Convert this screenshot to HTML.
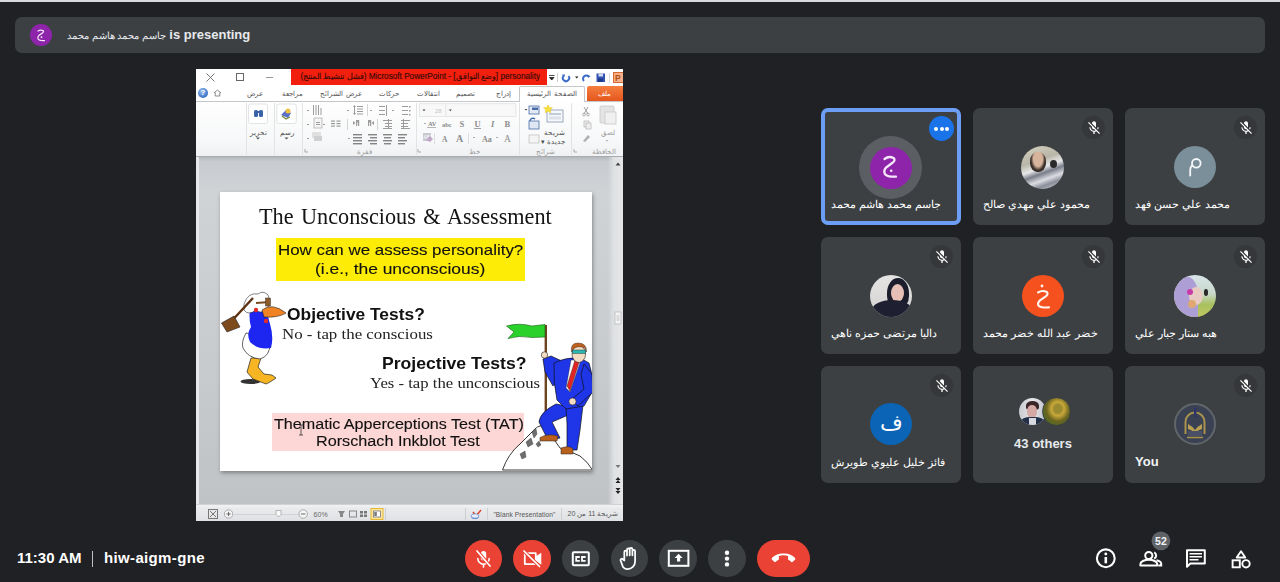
<!DOCTYPE html>
<html><head><meta charset="utf-8">
<style>
*{margin:0;padding:0;box-sizing:border-box}
html,body{width:1280px;height:582px;overflow:hidden;background:#202124;font-family:"Liberation Sans",sans-serif;position:relative}
.a{position:absolute}
svg{display:block}
.tile{position:absolute;width:140px;height:117px;background:#3c4043;border-radius:7px}
.ph{filter:blur(0.45px)}
.nm{position:absolute;left:10px;top:89px;color:#fff;font-size:11px;line-height:14px;white-space:nowrap}
.mute{position:absolute;left:109px;top:8px;width:23px;height:23px;border-radius:50%;background:#36373a}
.mute svg{position:absolute;left:3.5px;top:3.5px}
.avc{position:absolute;border-radius:50%;color:#fff;text-align:center;overflow:hidden}
.btn{position:absolute;top:539.5px;width:37.5px;height:37.5px;border-radius:50%;background:#3c4043}
.btn svg{position:absolute}
.red{background:#ea4335}
.ic{position:absolute;top:547px}
.c{position:absolute;transform:translateX(-50%)}
.st{line-height:20px;color:#111;white-space:nowrap;transform-origin:0 0}
.sep{top:34px;width:1px;height:52px;background:#e1e3e5}
</style></head>
<body>
<div class="a" style="left:0;top:0;width:1280px;height:2px;background:#d9dadc"></div>
<div class="a" style="left:15px;top:17px;width:1250px;height:36px;background:#3c4043;border-radius:7px"></div>
<div class="a" style="left:30px;top:24px;width:22px;height:22px;border-radius:50%;background:#8e24aa"></div>
<svg class="a" style="left:30px;top:24px" width="22" height="22" viewBox="0 0 22 22"><path d="M8 7 Q10.5 5.3 13 6.6 Q14.3 7.6 12.4 9 L9 11.4 Q7.3 13 8.1 15 Q9.3 17 14.5 16.6" fill="none" stroke="#f4e8f8" stroke-width="1.3" stroke-linecap="round" stroke-linejoin="round"/><circle cx="11.5" cy="13.2" r="0.9" fill="#f4e8f8"/></svg>
<div class="a" style="left:67px;top:27px;color:#e8eaed;font-size:12px;white-space:nowrap;line-height:16px"><span dir="rtl" style="font-size:9.6px">جاسم محمد هاشم محمد</span> <b style="font-size:13px">is presenting</b></div>

<!-- PowerPoint -->
<div class="a" id="ppt" style="left:196px;top:69px;width:427px;height:452px;background:#fff;overflow:hidden;font-family:'Liberation Sans',sans-serif">
  <!-- title bar -->
  <svg class="a" style="left:10px;top:4px" width="9" height="9" viewBox="0 0 9 9"><path d="M0.5 0.5L8.5 8.5M8.5 0.5L0.5 8.5" stroke="#6a6a6a" stroke-width="0.9"/></svg>
  <div class="a" style="left:40px;top:4px;width:8px;height:8px;border:1px solid #666;border-top-width:1.5px"></div>
  <div class="a" style="left:70px;top:8px;width:7px;height:1px;background:#999"></div>
  <div class="a" style="left:95px;top:0;width:256px;height:16px;background:#f11f0e"></div>
  <div class="a" style="left:96px;top:2px;width:248px;height:12px;font-size:8.2px;line-height:12px;color:#3b0b06;-webkit-text-stroke:0.15px #3b0b06;white-space:nowrap;text-align:right;overflow:hidden"><span style="display:inline-block;direction:ltr;unicode-bidi:isolate"><span style="unicode-bidi:isolate;direction:rtl">(فشل تنشيط المنتج)</span> Microsoft PowerPoint - <span style="unicode-bidi:isolate;direction:rtl">[وضع التوافق]</span> personality</span></div>
  <svg class="a" style="left:352px;top:3px" width="75" height="11" viewBox="0 0 75 11">
    <path d="M1 3.5h5.5M1.5 5.5h4.5l-2.25 2.5z" stroke="#222" fill="#222" stroke-width="0.8"/>
    <rect x="9" y="1" width="1" height="9" fill="#d0d0d0"/>
    <path d="M15.5 4a3.2 3.2 0 1 0 5 0" stroke="#3c6cc8" stroke-width="2" fill="none"/><path d="M14 2.5h3.2l-1.2 3z" fill="#3c6cc8"/>
    <path d="M27 4.5h3.5l-1.75 2z" fill="#222"/>
    <path d="M36 9a3.2 3.2 0 0 1 4.5-4.6" stroke="#3c6cc8" stroke-width="2" fill="none"/><path d="M39.5 2.5l3 1.8l-2.5 1.8z" fill="#3c6cc8"/>
    <rect x="48.5" y="1.5" width="8.5" height="8.5" fill="#3454b4"/><rect x="50.5" y="1.5" width="4.5" height="3" fill="#d4dcf0"/><rect x="50" y="6.5" width="5" height="3.5" fill="#1d3a8c"/>
    <rect x="61" y="1" width="1" height="9" fill="#ddd"/>
    <rect x="65.5" y="0.5" width="10" height="10" fill="#f5b08a" stroke="#d86a30" stroke-width="1"/><text x="67" y="9" font-size="8.5" font-weight="bold" fill="#b04e10" font-family="Liberation Sans">P</text>
  </svg>
  <!-- tab row -->
  <div class="a" style="left:0;top:32px;width:427px;height:1px;background:#c4c7ca"></div>
  <div class="a" style="left:2px;top:19px;width:10px;height:10px;border-radius:50%;background:radial-gradient(circle at 40% 35%,#9cc2f0,#3a72c8 70%);color:#fff;font-size:8px;line-height:10px;text-align:center;font-weight:bold">?</div>
  <svg class="a" style="left:17px;top:20px" width="9" height="8" viewBox="0 0 9 8"><path d="M1 4L4.5 1L8 4M2.2 3.5V7H6.8V3.5" stroke="#8a8a8a" fill="none" stroke-width="1"/></svg>
  <div class="a" style="left:323px;top:17px;width:66px;height:17px;background:#fff;border:1px solid #c4c7ca;border-bottom:none;border-radius:2px 2px 0 0"></div>
  <div class="a" style="left:391px;top:17px;width:37px;height:15px;background:linear-gradient(#f57f40,#e4561c);border-radius:2px 0 0 0"></div>
  <div class="a" style="left:0;top:18px;width:427px;height:14px;font-size:7.4px;line-height:14px;color:#505050;white-space:nowrap">
    <span class="c" style="left:59px" dir="rtl">عرض</span>
    <span class="c" style="left:96px" dir="rtl">مراجعة</span>
    <span class="c" style="left:145px" dir="rtl">عرض الشرائح</span>
    <span class="c" style="left:193px" dir="rtl">حركات</span>
    <span class="c" style="left:232px" dir="rtl">انتقالات</span>
    <span class="c" style="left:269px" dir="rtl">تصميم</span>
    <span class="c" style="left:307px" dir="rtl">إدراج</span>
    <span class="c" style="left:356px" dir="rtl">الصفحة الرئيسية</span>
    <span class="c" style="left:408px;color:#fff" dir="rtl">ملف</span>
  </div>
  <!-- ribbon -->
  <div class="a" style="left:0;top:33px;width:427px;height:54px;background:linear-gradient(#fefefe,#f7f8f9 70%,#f0f1f3)"></div>
  <div class="a" style="left:0;top:87px;width:427px;height:1px;background:#a8acb0"></div>
  <div class="a sep" style="left:50px"></div><div class="a sep" style="left:78px"></div><div class="a sep" style="left:106px"></div>
  <div class="a sep" style="left:220px"></div><div class="a sep" style="left:323px"></div><div class="a sep" style="left:375px"></div>
  <div class="a" style="left:0;top:77px;width:427px;height:11px;font-size:7px;line-height:11px;color:#9a9a9a;white-space:nowrap">
    <span class="c" style="left:168px" dir="rtl">فقرة</span>
    <span class="c" style="left:278px" dir="rtl">خط</span>
    <span class="c" style="left:349px" dir="rtl">شرائح</span>
    <span class="c" style="left:408px" dir="rtl">الحافظة</span>
  </div>
  <svg class="a" style="left:0;top:33px" width="427" height="54" viewBox="0 0 427 54">
    <g fill="none" stroke="#9a9a9a" stroke-width="0.8">
      <path d="M109 47v3h3M222 47v3h3M378 47v3h3"/>
    </g>
    <!-- editing / drawing buttons -->
    <rect x="52.5" y="2" width="19" height="19.5" rx="2" fill="#fff" stroke="#e2e3e5"/>
    <rect x="80.8" y="2" width="19.5" height="19.5" rx="2" fill="#fff" stroke="#e2e3e5"/>
    <g fill="#3a62a8"><rect x="58" y="8" width="4" height="7" rx="1.5"/><rect x="63" y="8" width="4" height="7" rx="1.5"/><rect x="60" y="9" width="5" height="2"/></g>
    <g><path d="M85 13l5-5 5 3-3 5z" fill="#5a6fc8"/><circle cx="92" cy="9" r="2.5" fill="#f0c040"/><path d="M86 14l4 3 4-2" fill="none" stroke="#7c8c3c" stroke-width="1.2"/></g>
    <path d="M60 35.5h4l-2 2z M88.5 35.5h4l-2 2z" fill="#555"/>
    <!-- paragraph group -->
    <g fill="#9c9c9c">
      <rect x="111" y="8" width="2" height="1"/><rect x="111" y="22" width="2" height="1"/><rect x="111" y="36" width="2" height="1"/>
      <rect x="117" y="3" width="1" height="10"/><rect x="119.5" y="3" width="1" height="10"/><rect x="122" y="3" width="1" height="10"/><rect x="124.5" y="6" width="1" height="7"/>
      <rect x="151" y="8" width="2" height="1"/>
      <path d="M157 5l1.5-2 1.5 2zM157 11l1.5 2 1.5-2z"/><rect x="158" y="5" width="1" height="6"/>
      <rect x="161" y="4" width="6" height="1"/><rect x="161" y="6.5" width="6" height="1"/><rect x="161" y="9" width="6" height="1"/><rect x="161" y="11.5" width="6" height="1"/>
      <rect x="171" y="2" width="0.8" height="12" fill="#ccc"/>
      <rect x="174" y="8" width="2" height="1"/>
      <rect x="183" y="4" width="6" height="1"/><rect x="183" y="8" width="6" height="1"/><rect x="183" y="12" width="6" height="1"/><rect x="190" y="3" width="1" height="11"/>
      <rect x="196" y="8" width="2" height="1"/>
      <rect x="206" y="4" width="6" height="1"/><rect x="206" y="8" width="6" height="1"/><rect x="206" y="12" width="6" height="1"/><rect x="213" y="4" width="1.5" height="1.5"/><rect x="213" y="8" width="1.5" height="1.5"/><rect x="213" y="12" width="1.5" height="1.5"/>
      <rect x="118" y="16" width="8" height="10" fill="#f4f4f4" stroke="#999" stroke-width="0.6"/><rect x="120" y="20" width="4" height="1"/><rect x="120" y="22" width="4" height="1"/>
      <rect x="127" y="22" width="2" height="1"/>
      <rect x="135" y="18.5" width="4" height="1.2"/><rect x="140.5" y="18.5" width="4" height="1.2"/><rect x="135" y="21" width="4" height="1.2"/><rect x="140.5" y="21" width="4" height="1.2"/><rect x="135" y="23.5" width="4" height="1.2"/><rect x="140.5" y="23.5" width="4" height="1.2"/>
      <rect x="151" y="17" width="0.8" height="11" fill="#ccc"/>
      <path d="M157 19l2.5 2-2.5 2z"/><rect x="160" y="18" width="1.2" height="6"/><rect x="162" y="18" width="1.2" height="6"/><rect x="160" y="18" width="3" height="2.5"/>
      <path d="M178 19l-2.5 2 2.5 2z"/><rect x="172" y="18" width="1.2" height="6"/><rect x="174" y="18" width="1.2" height="6"/><rect x="172" y="18" width="3" height="2.5"/>
      <rect x="181" y="17" width="0.8" height="11" fill="#ccc"/>
      <rect x="192" y="17" width="1" height="10"/><rect x="187" y="18" width="9" height="1"/><rect x="189" y="21" width="7" height="1"/><rect x="189" y="24" width="7" height="1"/><rect x="187" y="26" width="9" height="1"/>
      <rect x="207" y="17" width="1" height="10"/><rect x="205" y="18" width="9" height="1"/><rect x="205" y="21" width="7" height="1"/><rect x="205" y="24" width="7" height="1"/><rect x="205" y="26" width="9" height="1"/>
      <rect x="111" y="36" width="2" height="1"/>
      <rect x="116" y="30" width="9" height="6" fill="#e0e0e0"/><rect x="118" y="34" width="8" height="5" fill="#d0d0d0"/>
      <rect x="152" y="36" width="2" height="1"/>
      <g fill="#858585"><rect x="157" y="32" width="9" height="1.4"/><rect x="157" y="35" width="9" height="1.4"/><rect x="157" y="38" width="9" height="1.4"/><rect x="157" y="41" width="9" height="1.4"/>
      <rect x="172" y="32" width="9" height="1.4"/><rect x="174" y="35" width="7" height="1.4"/><rect x="172" y="38" width="9" height="1.4"/><rect x="174" y="41" width="7" height="1.4"/>
      <rect x="187" y="32" width="9" height="1.4"/><rect x="188" y="35" width="7" height="1.4"/><rect x="187" y="38" width="9" height="1.4"/><rect x="188" y="41" width="7" height="1.4"/>
      <rect x="202" y="32" width="9" height="1.4"/><rect x="202" y="35" width="7" height="1.4"/><rect x="202" y="38" width="9" height="1.4"/><rect x="202" y="41" width="7" height="1.4"/></g>
    </g>
    <!-- font group -->
    <rect x="223.6" y="1.7" width="96.3" height="12.7" fill="#f8f8f8" stroke="#e0e1e3" stroke-width="0.8"/>
    <rect x="249.4" y="2" width="0.8" height="12" fill="#e0e1e3"/>
    <path d="M226.5 7.5h3l-1.5 1.8zM252.8 7.5h3l-1.5 1.8z" fill="#444"/>
    <text x="239" y="10.5" font-size="6" fill="#c4c4c4" font-family="Liberation Sans">28</text>
    <g font-family="Liberation Serif" font-weight="bold" fill="#8c8c8c">
      <text x="232" y="23.5" font-size="6.5">AV</text><path d="M231 25.5h9" stroke="#888" stroke-width="0.6"/>
      <text x="246" y="24.5" font-size="6.5">abc</text>
      <text x="263.5" y="25" font-size="8.5">S</text>
      <text x="278.5" y="24.5" font-size="8.5">U</text><rect x="278" y="26" width="7" height="0.8"/>
      <text x="295" y="25" font-size="8.5" font-style="italic">I</text>
      <text x="308.5" y="25" font-size="8.5">B</text>
      <text x="246" y="39.5" font-size="7.5">A</text><text x="260" y="40" font-size="10">A</text>
      <text x="286" y="39.5" font-size="8">Aa</text>
      <text x="308" y="40" font-size="9.5" font-weight="normal">A</text>
    </g>
    <g fill="#999"><rect x="228" y="21" width="2" height="0.8"/><rect x="277" y="35" width="2" height="0.8"/><rect x="300" y="35" width="2" height="0.8"/></g>
    <rect x="238" y="31" width="0.8" height="11" fill="#d8d8d8"/><rect x="272" y="31" width="0.8" height="11" fill="#d8d8d8"/>
    <rect x="227" y="31" width="8" height="8" fill="#c8c8d0"/><text x="227.5" y="37" font-size="4.5" fill="#fff" font-family="Liberation Sans">ABC</text><path d="M230 38l4 -4 3 3-3 3z" fill="#c0a8c8"/>
    <!-- slides group -->
    <rect x="351" y="8" width="16" height="12" fill="#f6f8fb" stroke="#8fa0b6" stroke-width="0.9"/><rect x="353" y="11" width="12" height="2" fill="#c0ccdb"/><rect x="353" y="14.5" width="12" height="3" fill="#dbe2ea"/>
    <path d="M352 3l1.5 2.5 3 .3-2.2 2 .6 3-2.9-1.5-2.9 1.5.6-3-2.2-2 3-.3z" fill="#f6e33a" stroke="#e3b820" stroke-width="0.4"/>
    <rect x="333" y="4" width="10" height="8" fill="#e3eaf4" stroke="#4a6da8" stroke-width="0.8"/><rect x="336" y="5.5" width="6" height="2.5" fill="#4a6da8"/>
    <path d="M328.5 7h3l-1.5 1.6z" fill="#444"/>
    <rect x="333" y="19" width="10" height="8" fill="#dfe7f2" stroke="#4a6da8" stroke-width="0.8"/><path d="M334 19a3 3 0 0 1 5 -2" stroke="#3b68b4" stroke-width="1.4" fill="none"/>
    <rect x="333" y="33" width="10" height="8" fill="#f4f4f4" stroke="#c4c4c4" stroke-width="0.8"/>
    <!-- clipboard -->
    <rect x="404" y="4" width="14" height="17" rx="1" fill="#e4e4e4" stroke="#c6c6c6" stroke-width="0.8"/><rect x="409" y="10" width="11" height="12" fill="#f0f0f0" stroke="#c8c8c8" stroke-width="0.8"/>
    <path d="M388 5l4 7M392 5l-4 7" stroke="#9a9a9a" stroke-width="0.9"/><circle cx="388" cy="12.5" r="1.4" fill="none" stroke="#9a9a9a" stroke-width="0.8"/><circle cx="392" cy="12.5" r="1.4" fill="none" stroke="#9a9a9a" stroke-width="0.8"/>
    <rect x="388" y="19" width="5" height="6" fill="#eee" stroke="#aaa" stroke-width="0.6"/><rect x="390" y="21" width="5" height="6" fill="#eee" stroke="#aaa" stroke-width="0.6"/>
    <path d="M387 39l5-6 2 2-5 5z" fill="#b0b0b0"/>
    <path d="M409.5 38h3l-1.5 1.6z" fill="#aaa"/>
  </svg>
  <div class="a" style="left:0;top:33px;width:427px;height:54px;font-size:7px;line-height:9px;color:#4a4a4a;white-space:nowrap">
    <span class="c" style="left:62px;top:26px" dir="rtl">تحرير</span>
    <span class="c" style="left:90.5px;top:26px" dir="rtl">رسم</span>
    <span class="c" style="left:358px;top:26px" dir="rtl">شريحة</span>
    <span class="c" style="left:357px;top:35px" dir="rtl">جديدة ▾</span>
    <span class="c" style="left:412px;top:26px;color:#9a9a9a" dir="rtl">لصق</span>
  </div>
  <!-- slide area -->
  <div class="a" style="left:0;top:88px;width:427px;height:347px;background:linear-gradient(#b4b8bc 0,#c8ccd0 1.2%,#cfd3d6 10%,#c8cbce 60%,#c0c3c6 100%)"></div>
  <div class="a" style="left:0;top:88px;width:3px;height:347px;background:#e6e8ea"></div>
  <div class="a" style="left:412px;top:88px;width:15px;height:347px;background:linear-gradient(90deg,rgba(226,228,230,0),#dfe1e3 40%,#e4e6e8)"></div>
  <svg class="a" style="left:417px;top:88px" width="10" height="347" viewBox="0 0 10 347">
    <path d="M2.5 8.5h5l-2.5-3z" fill="#444"/>
    <path d="M2.5 308h5l-2.5 3z" fill="#777"/>
    <path d="M2.5 323h5l-2.5-3zM2.5 326h5l-2.5-3z" fill="#222"/>
    <path d="M2.5 331h5l-2.5 3zM2.5 334h5l-2.5 3z" fill="#222"/>
    <rect x="2" y="155" width="6" height="12" fill="#f4f4f4" stroke="#aaa" stroke-width="0.6"/><path d="M3.5 159h3M3.5 161h3M3.5 163h3" stroke="#888" stroke-width="0.5"/>
  </svg>
  <div class="a" id="slide" style="left:24px;top:123px;width:372px;height:279px;background:#fff;box-shadow:1px 2px 4px rgba(0,0,0,0.35);overflow:hidden">
  <div class="a st" style="left:39px;top:15px;font-family:'Liberation Serif',serif;font-size:22.5px;color:#141414;word-spacing:2px;transform:scaleX(0.987)">The Unconscious &amp; Assessment</div>
  <div class="a" style="left:55.5px;top:46px;width:249.5px;height:43px;background:#fdec06"></div>
  <div class="a st" style="left:58px;top:48px;font-size:15px;transform:scaleX(1.127);-webkit-text-stroke:0.12px #111">How can we assess personality?</div>
  <div class="a st" style="left:95px;top:67px;font-size:15px;transform:scaleX(1.16);-webkit-text-stroke:0.12px #111">(i.e., the unconscious)</div>
  <div class="a st" style="left:67px;top:112px;font-size:16.5px;font-weight:bold;transform:scaleX(1.053)">Objective Tests?</div>
  <div class="a st" style="left:62px;top:132px;font-family:'Liberation Serif',serif;font-size:15.5px;color:#222;transform:scaleX(1.089)">No - tap the conscious</div>
  <div class="a st" style="left:162px;top:161px;font-size:16.5px;font-weight:bold;transform:scaleX(1.067)">Projective Tests?</div>
  <div class="a st" style="left:150px;top:181px;font-family:'Liberation Serif',serif;font-size:15.5px;color:#222;transform:scaleX(1.078)">Yes - tap the unconscious</div>
  <div class="a" style="left:52px;top:221px;width:252px;height:38px;background:#fcd7d5"></div>
  <div class="a st" style="left:54px;top:222px;font-size:14px;transform:scaleX(1.151);-webkit-text-stroke:0.12px #111">Thematic Apperceptions Test (TAT)</div>
  <div class="a st" style="left:96px;top:239px;font-size:14px;transform:scaleX(1.158);-webkit-text-stroke:0.12px #111">Rorschach Inkblot Test</div>
  <svg class="a" style="left:0;top:0" width="372" height="279" viewBox="0 0 372 279">
    <path d="M79 233h4M81 233v10M79 243h4" stroke="#333" stroke-width="0.8"/>
    <!-- duck -->
    <ellipse cx="30.5" cy="189.5" rx="10" ry="2.6" fill="#333"/>
    <path d="M31 166 L27 180 L33 187 L46 192 L50 190 L56 186 L52 183 L44 182 L38 175 L41 166z" fill="#f7b523" stroke="#222" stroke-width="0.7"/>
    <path d="M26 141 Q21 150 23 156 Q28 166 40 167 Q50 164 50 152 L49 145z" fill="#fff" stroke="#222" stroke-width="0.7"/>
    <path d="M31 110 Q28 125 31 135 Q26 142 30 150 Q38 158 51 156 Q54 145 50 132 Q47 120 44 112 Q38 106 31 110z" fill="#1c26f0"/>
    <path d="M24 112 Q28 100 38 102 Q43 98 48 103 Q52 112 46 118 Q40 122 36 118 Q28 124 24 118z" fill="#fff" stroke="#333" stroke-width="0.6"/>
    <path d="M42 118 Q52 110 66 121 Q58 126 44 125z" fill="#f08424" stroke="#222" stroke-width="0.6"/>
    <path d="M36 111l14-1" stroke="#7a4a20" stroke-width="1.8"/><rect x="45.5" y="106" width="5" height="8" fill="#8b5a2b" stroke="#222" stroke-width="0.4"/>
    <path d="M13.5 127 L33 106" stroke="#5c3010" stroke-width="2.4"/>
    <path d="M1.5 131 L14 124 L20 135 L7 140z" fill="#7d4a1e" stroke="#222" stroke-width="0.6"/>
    <circle cx="36" cy="118" r="2.2" fill="#e02a2a"/><circle cx="46" cy="129" r="2.2" fill="#e02a2a"/>
    <!-- mountain -->
    <path d="M282.5 278 Q288 262 300 252 L312 240 Q318 233 322 234 L328 244 Q336 248 340 256 Q352 260 360 264 Q368 270 372.5 278 Z" fill="#fff" stroke="#222" stroke-width="0.9"/>
    <path d="M312 240l4-3 1 5-3 4zM306 250l5-4 2 6-5 3zM300 262l5-3 1 6-4 2zM316 252l3-3 2 4-3 2z" fill="#6e6e6e" stroke="#333" stroke-width="0.4"/>
    <!-- flag/pole -->
    <path d="M325.8 133 L325.8 234" stroke="#6e4420" stroke-width="2.4"/>
    <path d="M286.5 134 Q299 130.5 312 134 L325 132.5 L325 145 L312 145.5 Q299 143 288 146.5 L294 140 Z" fill="#2ad12a" stroke="#1a5a1a" stroke-width="0.6"/>
    <!-- man -->
    <path d="M336 212 L352 215 L346 224 L332 230 L340 246 L328 248 L319 230 Q320 220 336 212 Z" fill="#1f35e8" stroke="#111" stroke-width="0.7"/>
    <path d="M346 214 L363 213 L360 238 L357 258 L347 258 L347 232 Z" fill="#1f35e8" stroke="#111" stroke-width="0.7"/>
    <path d="M323 167 L331 164 L346 171 L342 184 L333 194 L325 180 Z" fill="#1f35e8" stroke="#111" stroke-width="0.7"/>
    <path d="M334 171 Q346 165 360 166 L369 171 Q374 186 371 202 L364 214 L346 217 L337 208 Q333 190 334 171 Z" fill="#1f35e8" stroke="#111" stroke-width="0.7"/>
    <path d="M351 168 L361 168 L350 200 L346 196 Z" fill="#fff" stroke="#222" stroke-width="0.4"/>
    <path d="M355 168 L359.5 169 L350 199 L347 194 Z" fill="#e42424" stroke="#222" stroke-width="0.4"/>
    <path d="M364 172 L372 182 L373 200 L358 214 L351 208 L364 197 L361 182 Z" fill="#1f35e8" stroke="#111" stroke-width="0.7"/>
    <circle cx="352.5" cy="209.5" r="3.6" fill="#f4dcc4" stroke="#222" stroke-width="0.6"/>
    <circle cx="324.5" cy="163" r="3.2" fill="#f4dcc4" stroke="#222" stroke-width="0.6"/>
    <ellipse cx="358.8" cy="162" rx="6.8" ry="8.5" fill="#f4dcc4" stroke="#222" stroke-width="0.6"/>
    <path d="M351.5 160 Q350 151 358 151 Q367 151 366.5 160 L365 156 Q358 153 353 157 Z" fill="#c0601c" stroke="#222" stroke-width="0.4"/>
    <path d="M352.5 158h13v3.5h-13z" fill="#2ab8b0" stroke="#222" stroke-width="0.4"/>
    <path d="M320 245.5 Q328 241 338 244 L337 249 L320 249 Z" fill="#b8601c" stroke="#222" stroke-width="0.5"/>
    <path d="M341 256 Q350 253 353 257 L353 262 L341 262 Z" fill="#b8601c" stroke="#222" stroke-width="0.5"/>
  </svg>
</div>

  <!-- status bar -->
  <div class="a" style="left:0;top:435px;width:427px;height:3px;background:#eef0f2;border-top:1px solid #d0d2d4"></div>
  <div class="a" style="left:0;top:438px;width:427px;height:14px;background:linear-gradient(#eaecee,#dfe1e4)"></div>
  <svg class="a" style="left:0;top:438px" width="427" height="14" viewBox="0 0 427 14">
    <rect x="12.5" y="2.5" width="9" height="9" fill="#e8e8e8" stroke="#777" stroke-width="1"/><path d="M14 4l6 6M20 4l-6 6" stroke="#777" stroke-width="1"/>
    <circle cx="32.6" cy="7" r="4.2" fill="#f6f6f6" stroke="#999" stroke-width="0.8"/><path d="M30.5 7h4.2M32.6 4.9v4.2" stroke="#666" stroke-width="1"/>
    <path d="M38 7.5h65" stroke="#d0d2d4" stroke-width="1"/>
    <path d="M80 3.5h5v4l-2.5 2.5-2.5-2.5z" fill="#fafafa" stroke="#999" stroke-width="0.7"/>
    <circle cx="107.2" cy="7" r="4.2" fill="#f6f6f6" stroke="#999" stroke-width="0.8"/><path d="M105 7h4.4" stroke="#666" stroke-width="1"/>
    <text x="117.6" y="9.8" font-size="7" fill="#6a6a6a" font-family="Liberation Sans">60%</text>
    <path d="M142 4h7l-2 3v3h-3v-3z" fill="#888"/>
    <rect x="153.5" y="4" width="7" height="6" fill="none" stroke="#888" stroke-width="1"/>
    <path d="M164 4h3v2.5h-3zM168 4h3v2.5h-3zM164 7.5h3v2.5h-3zM168 7.5h3v2.5h-3z" fill="#777"/>
    <rect x="175" y="1.5" width="12" height="11" fill="#fde7a0" stroke="#e8b830" stroke-width="1"/><rect x="177.5" y="4" width="7" height="6" fill="#fff" stroke="#777" stroke-width="0.8"/><rect x="178.3" y="5" width="2.5" height="4" fill="#777"/>
    <rect x="189" y="1" width="0.8" height="12" fill="#c8cacc"/>
    <rect x="269" y="1" width="0.8" height="12" fill="#c8cacc"/>
    <path d="M275 9a4 3 0 0 0 8 0" fill="#4a7cd0"/><path d="M277 5l3 4 5-6" stroke="#e04020" stroke-width="1.4" fill="none"/><ellipse cx="279" cy="9" rx="4" ry="2.2" fill="#e8eef8" stroke="#5a80c8" stroke-width="0.7"/>
    <rect x="291" y="1" width="0.8" height="12" fill="#c8cacc"/>
    <text x="297.4" y="9.8" font-size="6.6" fill="#555" font-family="Liberation Sans" textLength="62">"Blank Presentation"</text>
    <rect x="365" y="1" width="0.8" height="12" fill="#c8cacc"/>
  </svg>
  <div class="a" style="left:371px;top:439px;width:52px;height:12px;font-size:7px;line-height:12px;color:#555;white-space:nowrap;text-align:center;overflow:hidden" dir="rtl">شريحة 11 من 20</div>
</div>

<!-- tiles -->
<svg width="0" height="0" style="position:absolute"><defs>
<path id="micoff" d="M19 11h-1.7c0 .74-.16 1.43-.43 2.05l1.23 1.23c.56-.98.9-2.09.9-3.28zm-4.02.17c0-.06.02-.11.02-.17V5c0-1.66-1.34-3-3-3S9 3.34 9 5v.18l5.98 5.99zM4.27 3L3 4.27l6.01 6.01V11c0 1.66 1.33 3 2.99 3 .22 0 .44-.03.65-.08l1.66 1.66c-.71.33-1.5.52-2.31.52-2.76 0-5.3-2.1-5.3-5.1H5c0 3.41 2.72 6.23 6 6.72V21h2v-3.28c.91-.13 1.77-.45 2.54-.9L19.73 21 21 19.73 4.27 3z"/>
</defs></svg>

<div class="tile" style="left:821px;top:108px;box-shadow:0 0 0 4px #6d9ef6 inset">
  <div class="avc" style="left:38px;top:28px;width:63px;height:63px;background:#5b5e62"></div>
  <div class="avc" style="left:48.5px;top:38.5px;width:42px;height:42px;background:#8e24aa"></div>
  <svg class="a" style="left:0;top:0" width="140" height="117" viewBox="0 0 140 117"><path d="M63.5 51 Q68 47.5 72.5 50 Q75 52 71.5 54.8 L65.5 59.2 Q62.3 62 63.8 65.8 Q66 69.2 75 68.6" fill="none" stroke="#f4e8f8" stroke-width="2.3" stroke-linecap="round" stroke-linejoin="round"/><circle cx="70.2" cy="62.8" r="1.3" fill="#f4e8f8"/></svg>
  <div class="avc" style="left:108px;top:8px;width:25px;height:25px;background:#1a73e8">
    <span class="a" style="left:5px;top:10.5px;width:4px;height:4px;border-radius:50%;background:#fff"></span>
    <span class="a" style="left:10.5px;top:10.5px;width:4px;height:4px;border-radius:50%;background:#fff"></span>
    <span class="a" style="left:16px;top:10.5px;width:4px;height:4px;border-radius:50%;background:#fff"></span>
  </div>
  <div class="nm" dir="rtl">جاسم محمد هاشم محمد</div>
</div>
<div class="tile" style="left:973px;top:108px">
  <div class="avc ph" style="left:48px;top:38px;width:43px;height:43px;background:linear-gradient(160deg,#d9d4c4 0%,#b8b6a8 35%,#e8e8ea 50%,#7a7e8a 60%,#dcdde2 72%,#8a8e9a 82%,#e0e0e4 100%)">
    <span class="a" style="left:9px;top:6px;width:16px;height:20px;border-radius:45%;background:radial-gradient(ellipse at 50% 35%,#d8b49c 0 40%,#3a302a 62%)"></span>
    <span class="a" style="left:29px;top:14px;width:7px;height:8px;border-radius:50%;background:#2a2a2a"></span>
  </div>
  <div class="mute"><svg width="16" height="16" viewBox="0 0 24 24"><use href="#micoff" fill="#fff"/></svg></div>
  <div class="nm" dir="rtl">محمود علي مهدي صالح</div>
</div>
<div class="tile" style="left:1125px;top:108px">
  <div class="avc" style="left:49px;top:38px;width:42px;height:42px;background:#7a8f99"></div>
  <svg class="a" style="left:0;top:0" width="140" height="117" viewBox="0 0 140 117"><circle cx="71.3" cy="55.3" r="4.3" fill="none" stroke="#f4f6f8" stroke-width="1.8"/><path d="M67.3 57.2 Q65.2 59 65.2 62 V67.5" fill="none" stroke="#f4f6f8" stroke-width="1.8" stroke-linecap="round"/></svg>
  <div class="mute"><svg width="16" height="16" viewBox="0 0 24 24"><use href="#micoff" fill="#fff"/></svg></div>
  <div class="nm" dir="rtl">محمد علي حسن فهد</div>
</div>
<div class="tile" style="left:821px;top:237px">
  <div class="avc ph" style="left:49px;top:38px;width:42px;height:42px;background:linear-gradient(180deg,#e6e4e2,#d4d2d0)">
    <span class="a" style="left:17px;top:3px;width:22px;height:30px;border-radius:50% 50% 40% 40%;background:#1c1d2c"></span>
    <span class="a" style="left:21px;top:9px;width:13px;height:18px;border-radius:50%;background:#e6c0b6"></span>
    <span class="a" style="left:2px;top:25px;width:40px;height:20px;border-radius:50% 50% 0 0;background:#1e1f30"></span>
  </div>
  <div class="mute"><svg width="16" height="16" viewBox="0 0 24 24"><use href="#micoff" fill="#fff"/></svg></div>
  <div class="nm" dir="rtl">داليا مرتضى حمزه ناهي</div>
</div>
<div class="tile" style="left:973px;top:237px">
  <div class="avc" style="left:48.5px;top:37.5px;width:42px;height:42px;background:#f4511e"></div>
  <svg class="a" style="left:0;top:0" width="140" height="117" viewBox="0 0 140 117"><path d="M65 55.5 Q69.5 52.8 73.8 55 Q75.8 57 72.8 59.3 L67 63.3 Q64.3 65.8 65.3 68.3 Q67.3 71 76 70.4" fill="none" stroke="#fff4ee" stroke-width="2.1" stroke-linecap="round" stroke-linejoin="round"/><circle cx="69" cy="49" r="1.4" fill="#fff4ee"/></svg>
  <div class="mute"><svg width="16" height="16" viewBox="0 0 24 24"><use href="#micoff" fill="#fff"/></svg></div>
  <div class="nm" dir="rtl">خضر عبد الله خضر محمد</div>
</div>
<div class="tile" style="left:1125px;top:237px">
  <div class="avc ph" style="left:49px;top:38px;width:42px;height:42px;background:linear-gradient(180deg,#d8e4ea 0%,#c8d8c8 45%,#a8c060 70%,#c0c860 100%)">
    <span class="a" style="left:-2px;top:2px;width:26px;height:44px;border-radius:50% 40% 0 0;background:#ad9fd6"></span>
    <span class="a" style="left:15px;top:12px;width:14px;height:18px;border-radius:50%;background:#e8ccc4"></span>
    <span class="a" style="left:13px;top:14px;width:6px;height:6px;border-radius:50%;background:#c83aa8"></span>
    <span class="a" style="left:14px;top:25px;width:8px;height:8px;border-radius:50%;background:#e0a870"></span>
    <span class="a" style="left:30px;top:14px;width:4px;height:7px;border-radius:40%;background:#2a2a2a"></span>
  </div>
  <div class="mute"><svg width="16" height="16" viewBox="0 0 24 24"><use href="#micoff" fill="#fff"/></svg></div>
  <div class="nm" dir="rtl">هبه ستار جبار علي</div>
</div>
<div class="tile" style="left:821px;top:366px">
  <div class="avc" style="left:49px;top:37px;width:42px;height:42px;background:#0b64b5;font-size:22px;line-height:40px">ف</div>
  <div class="mute"><svg width="16" height="16" viewBox="0 0 24 24"><use href="#micoff" fill="#fff"/></svg></div>
  <div class="nm" dir="rtl">فائز خليل عليوي طويرش</div>
</div>
<div class="tile" style="left:973px;top:366px">
  <div class="avc ph" style="left:45.5px;top:32px;width:27px;height:27px;background:linear-gradient(90deg,#c8cad0,#e6e6ea 50%,#c0c4cc)">
    <span class="a" style="left:7px;top:3px;width:13px;height:9px;border-radius:50% 50% 30% 30%;background:#3a2628"></span>
    <span class="a" style="left:8.5px;top:7px;width:10px;height:13px;border-radius:45%;background:#d4a8a4"></span>
    <span class="a" style="left:2px;top:19px;width:23px;height:10px;border-radius:40% 40% 0 0;background:#23304a"></span>
    <span class="a" style="left:10px;top:20px;width:7px;height:8px;background:#d8d8e0"></span>
  </div>
  <div class="avc ph" style="left:69px;top:31px;width:29px;height:29px;border:1.5px solid #3c4043;background:radial-gradient(ellipse at 55% 40%,#9a8a30 0 18%,#c8a838 30%,#6a6420 55%,#4a6a24 80%)"></div>
  <div class="a" style="left:0;width:140px;top:70px;text-align:center;color:#e8eaed;font-size:13px;font-weight:bold;line-height:16px">43 others</div>
</div>
<div class="tile" style="left:1125px;top:366px">
  <div class="avc" style="left:49px;top:37px;width:42px;height:42px;background:#3a4152;border:2px solid #62666a"></div>
  <svg class="a" style="left:49px;top:37px" width="42" height="42" viewBox="0 0 42 42">
    <path d="M11.5 31V19a9.5 9.5 0 0 1 19 0v12" fill="none" stroke="#a8924c" stroke-width="2"/>
    <rect x="20" y="5" width="2.5" height="9" fill="#2c3468"/>
    <path d="M14 21q4 2 7 6q3-4 7-6v5q-4 1-7 4q-3-3-7-4z" fill="#b8a050"/>
    <rect x="14" y="28" width="14" height="5" fill="#4a5068"/>
    <path d="M13 34.5h16" stroke="#a8924c" stroke-width="1.5"/>
  </svg>
  <div class="mute"><svg width="16" height="16" viewBox="0 0 24 24"><use href="#micoff" fill="#fff"/></svg></div>
  <div class="nm" style="font-weight:bold;font-size:13px;top:89px;color:#f1f3f4">You</div>
</div>

<!-- bottom bar -->
<div class="a" style="left:17px;top:550px;color:#fff;font-size:15px;font-weight:bold;line-height:16px;white-space:nowrap">11:30 AM</div>
<div class="a" style="left:92px;top:551px;width:1px;height:16px;background:#bdc1c6"></div>
<div class="a" style="left:104px;top:550px;color:#fff;font-size:15px;font-weight:bold;line-height:16px;white-space:nowrap;letter-spacing:0.35px">hiw-aigm-gne</div>

<div class="btn red" style="left:464.5px"></div>
<div class="btn red" style="left:513px"></div>
<div class="btn" style="left:561.8px"></div>
<div class="btn" style="left:610.7px"></div>
<div class="btn" style="left:659.2px"></div>
<div class="btn" style="left:708px"></div>
<div class="btn red" style="left:757.2px;width:52.5px;border-radius:19px"></div>
<svg class="a" style="left:0;top:530px" width="1280" height="52" viewBox="0 530 1280 52">
  <g stroke="#fff" fill="none" stroke-linecap="round">
    <rect x="480.8" y="551" width="5.4" height="9.5" rx="2.7" fill="#fff" stroke="none"/>
    <path d="M477.8 558.5a5.7 5.7 0 0 0 11.4 0" stroke-width="1.6"/>
    <path d="M483.5 564.5v2.6" stroke-width="1.6"/>
    <path d="M477 550.5l13 15.5" stroke="#ea4335" stroke-width="3.4"/>
    <path d="M477 551l13 15" stroke-width="1.7"/>
    <rect x="524.8" y="553.2" width="11" height="11" stroke-width="1.8" rx="0.5"/>
    <path d="M536 557.2l4.5-3v9l-4.5-3" stroke-width="1.6" fill="#fff"/>
    <path d="M523.5 550.5l16 16" stroke="#ea4335" stroke-width="3.4"/>
    <path d="M524 551l15.5 15.5" stroke-width="1.7"/>
    <rect x="572.8" y="552.2" width="16" height="13" rx="1" stroke-width="2"/>
    <path d="M579.8 557h-3.6v3.9h3.6M585.6 557h-3.6v3.9h3.6" stroke-width="1.8" stroke-linecap="butt"/>
    <path d="M624.3 560.5V552a1.35 1.35 0 0 1 2.7 0v3.5V549.8a1.35 1.35 0 0 1 2.7 0v5.5V549.3a1.35 1.35 0 0 1 2.7 0v6V551.2a1.35 1.35 0 0 1 2.7 0V561.5a7.5 7.5 0 0 1-7.5 7.5h-0.6a5 5 0 0 1-4-2L620.8 561a1.3 1.3 0 0 1 2-1.7z" stroke-width="1.75" stroke-linejoin="round"/>
    <rect x="668.8" y="550.8" width="19.6" height="15" stroke-width="2" stroke-linecap="butt"/>
  </g>
  <g fill="#fff">
    <path d="M678.6 553.8l4 4.2h-2.4v3.6h-3.2V558h-2.4z"/>
    <circle cx="727" cy="552.8" r="2.2"/><circle cx="727" cy="558.6" r="2.2"/><circle cx="727" cy="564.4" r="2.2"/>
  </g>
  <svg x="771.5" y="553.3" width="24" height="10" viewBox="0 7 24 10"><path fill="#fff" d="M12 9c-1.6 0-3.15.25-4.6.72v3.1c0 .39-.23.74-.56.9-.98.49-1.87 1.12-2.66 1.85-.18.18-.43.28-.7.28-.28 0-.53-.11-.71-.29L.29 13.08c-.18-.17-.29-.42-.29-.7 0-.28.11-.53.29-.71C3.34 8.78 7.46 7 12 7s8.66 1.78 11.71 4.67c.18.18.29.43.29.71 0 .28-.11.53-.29.71l-2.48 2.48c-.18.18-.43.29-.71.29-.27 0-.52-.11-.7-.28-.79-.74-1.690-1.36-2.67-1.85-.33-.16-.56-.5-.56-.9v-3.1C15.15 9.25 13.6 9 12 9z"/></svg>
  <g stroke="#fff" fill="none">
    <circle cx="1105.8" cy="558.3" r="8.9" stroke-width="2.1"/>
    <path d="M1105.8 557v6.3" stroke-width="2.6"/>
    <path d="M1145.2 555.5a3.6 3.6 0 1 0 7.2 0a3.6 3.6 0 1 0 -7.2 0" stroke-width="2"/>
    <path d="M1154.2 552.3a3.6 3.6 0 0 1 0 6.4" stroke-width="2"/>
    <path d="M1140.4 565.5v-1.5c0-2.4 4-4.2 8.4-4.2s8.4 1.8 8.4 4.2v1.5z" stroke-width="2" stroke-linejoin="round"/>
    <path d="M1156.5 560.2c3 .6 4.7 2 4.7 3.6v1.7h-3" stroke-width="2"/>
    <path d="M1187 550.3h17.8v13.2h-14.5l-3.3 3.3z" stroke-width="2" stroke-linejoin="round"/>
    <path d="M1189.5 553.8h12.5M1189.5 556.8h12.5M1189.5 559.8h9" stroke-width="1.6"/>
    <path d="M1241 551.2l4.3 6.3h-8.6z" stroke-width="1.9" stroke-linejoin="round"/>
    <rect x="1232.6" y="560.3" width="7.2" height="7" stroke-width="1.9"/>
    <circle cx="1246" cy="563.8" r="3.7" stroke-width="1.9"/>
  </g>
  <circle cx="1105.8" cy="554" r="1.45" fill="#fff"/>
  <circle cx="1160.9" cy="540.8" r="9.4" fill="#5f6368"/>
  <text x="1160.9" y="544.5" font-size="10.5" font-weight="bold" fill="#f1f3f4" text-anchor="middle" font-family="Liberation Sans">52</text>
</svg>
</body></html>
